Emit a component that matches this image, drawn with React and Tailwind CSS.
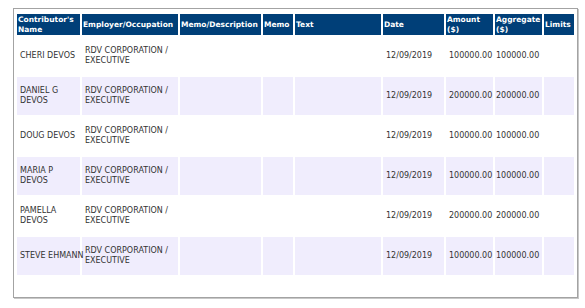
import React from 'react';

const COLS = [
  { label: "Contributor's Name", w: 'w-[63px]' },
  { label: 'Employer/Occupation', w: 'w-[96px]' },
  { label: 'Memo/Description', w: 'w-[81px]' },
  { label: 'Memo', w: 'w-[30px]' },
  { label: 'Text', w: 'w-[86px]' },
  { label: 'Date', w: 'w-[61px]' },
  { label: 'Amount ($)', w: 'w-[47px]' },
  { label: 'Aggregate ($)', w: 'w-[47px]' },
  { label: 'Limits', w: 'w-[30px]' },
];

// names are pre-split where the original column wraps them
const ROWS = [
  { name: ['CHERI DEVOS'], amount: '100000.00' },
  { name: ['DANIEL G', 'DEVOS'], amount: '200000.00' },
  { name: ['DOUG DEVOS'], amount: '100000.00' },
  { name: ['MARIA P', 'DEVOS'], amount: '100000.00' },
  { name: ['PAMELLA', 'DEVOS'], amount: '200000.00' },
  { name: ['STEVE EHMANN'], amount: '100000.00' },
];

export default function App() {
  return (
    <div className="w-[585px] h-[308px] bg-white pt-2 pl-[13px]">
      <div
        className="w-[565px] h-[290px] border border-[#a3a3a3] shadow-[1px_1px_0_#c8c8c8] pt-[3px] pl-[1px] text-[#333]"
        style={{ fontFamily: '"DejaVu Sans", Verdana, sans-serif' }}
      >
        <table className="w-[561px] border-separate border-spacing-[2px] table-fixed text-[8px] leading-[10px]">
          <thead>
            <tr>
              {COLS.map((c) => (
                <th
                  key={c.label}
                  className={`${c.w} h-[21px] bg-[#003f78] text-white text-[7.5px] font-bold text-left align-middle px-[1px]`}
                >
                  {c.label}
                </th>
              ))}
            </tr>
          </thead>
          <tbody>
            {ROWS.map((r, i) => (
              <tr key={r.name.join(' ')} className={i % 2 === 1 ? 'bg-[#f0edfd]' : 'bg-white'}>
                <td className="h-[38px] pl-[3px] align-middle whitespace-nowrap">
                  {r.name.map((l) => (
                    <div key={l}>{l}</div>
                  ))}
                </td>
                <td className="pl-[3px] align-middle">RDV CORPORATION / EXECUTIVE</td>
                <td></td>
                <td></td>
                <td></td>
                <td className="pl-[3px] align-middle">12/09/2019</td>
                <td className="pl-[3px] align-middle whitespace-nowrap">{r.amount}</td>
                <td className="pl-[1px] align-middle whitespace-nowrap">{r.amount}</td>
                <td></td>
              </tr>
            ))}
          </tbody>
        </table>
      </div>
    </div>
  );
}
